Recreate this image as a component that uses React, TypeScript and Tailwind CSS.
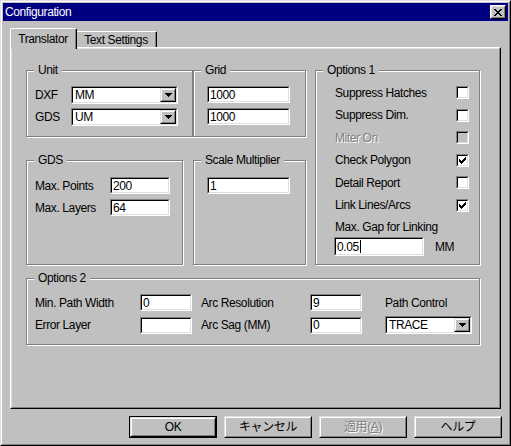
import React from "react";

type P = { className?: string; children?: React.ReactNode };

function Field({ className = "", children, disabled }: P & { disabled?: boolean }) {
  return (
    <div className={`border border-t-[#808080] border-l-[#808080] border-b-white border-r-white ${className}`}>
      <div
        className={`h-full w-full border border-t-black border-l-black border-b-[#dfdfdf] border-r-[#dfdfdf] flex items-center overflow-hidden ${
          disabled ? "bg-[#c0c0c0]" : "bg-white"
        }`}
      >
        {children}
      </div>
    </div>
  );
}

function Raised({ className = "", children }: P) {
  return (
    <div className={`border border-t-[#dfdfdf] border-l-[#dfdfdf] border-b-black border-r-black bg-[#c0c0c0] ${className}`}>
      <div className="h-full w-full border border-t-white border-l-white border-b-[#808080] border-r-[#808080] flex items-center justify-center">
        {children}
      </div>
    </div>
  );
}

function Arrow() {
  return (
    <svg width="7" height="4" viewBox="0 0 7 4" shapeRendering="crispEdges">
      <rect x="0" y="0" width="7" height="1" fill="#000" />
      <rect x="1" y="1" width="5" height="1" fill="#000" />
      <rect x="2" y="2" width="3" height="1" fill="#000" />
      <rect x="3" y="3" width="1" height="1" fill="#000" />
    </svg>
  );
}

function Input({ value, className = "", cursor }: { value: string; className?: string; cursor?: boolean }) {
  return (
    <Field className={className}>
      <span className="pl-[1px] leading-none">{value}</span>
      {cursor && <span className="ml-px w-px h-[13px] bg-black" />}
    </Field>
  );
}

function Combo({ value, className = "" }: { value: string; className?: string }) {
  return (
    <Field className={className}>
      <span className="flex-1 pl-[2px] leading-none">{value}</span>
      <Raised className="w-[16px] h-full">
        <Arrow />
      </Raised>
    </Field>
  );
}

function Check() {
  const rows: [number, number, number][] = [
    [6, 0, 1],
    [5, 1, 2],
    [0, 2, 1],
    [4, 2, 3],
    [0, 3, 2],
    [3, 3, 3],
    [0, 4, 5],
    [1, 5, 3],
    [2, 6, 1],
  ];
  return (
    <svg width="7" height="7" viewBox="0 0 7 7" shapeRendering="crispEdges">
      {rows.map(([x, y, w], i) => (
        <rect key={i} x={x} y={y} width={w} height="1" fill="#000" />
      ))}
    </svg>
  );
}

function CheckBox({ checked, disabled }: { checked?: boolean; disabled?: boolean }) {
  return (
    <Field className="w-[13px] h-[13px]" disabled={disabled}>
      <div className="w-full h-full flex items-center justify-center">{checked && <Check />}</div>
    </Field>
  );
}

function Group({ title, className = "", children }: P & { title: string }) {
  return (
    <div className={`relative border border-[#808080] shadow-[inset_1px_1px_0_#fff,1px_1px_0_#fff] ${className}`}>
      <span className="absolute left-[7px] top-[-8px] h-[14px] leading-[14px] px-[4px] bg-[#c0c0c0] whitespace-nowrap">
        {title}
      </span>
      {children}
    </div>
  );
}

function CheckRow({ label, h, checked, disabled }: { label: string; h: string; checked?: boolean; disabled?: boolean }) {
  return (
    <div className={`flex items-center ${h}`}>
      <span
        className={`w-[121px] leading-none ${disabled ? "text-[#808080] [text-shadow:1px_1px_0_#fff]" : ""}`}
      >
        {label}
      </span>
      <CheckBox checked={checked} disabled={disabled} />
    </div>
  );
}

function Button({ children, def, disabled }: P & { def?: boolean; disabled?: boolean }) {
  const inner = (
    <Raised className="w-full h-full">
      <span className={`leading-none ${disabled ? "text-[#808080] [text-shadow:1px_1px_0_#fff]" : ""}`}>{children}</span>
    </Raised>
  );
  return def ? (
    <div className="w-[88px] h-[22px] border border-black">{inner}</div>
  ) : (
    <div className="w-[88px] h-[22px]">{inner}</div>
  );
}

function CloseBtn() {
  const rows: [number, number, number][] = [
    [0, 0, 2],
    [6, 0, 2],
    [1, 1, 2],
    [5, 1, 2],
    [2, 2, 4],
    [3, 3, 2],
    [2, 4, 4],
    [1, 5, 2],
    [5, 5, 2],
    [0, 6, 2],
    [6, 6, 2],
  ];
  return (
    <div className="w-[16px] h-[14px] border border-t-white border-l-white border-b-black border-r-black bg-[#c0c0c0]">
      <div className="h-full w-full border border-t-[#dfdfdf] border-l-[#dfdfdf] border-b-[#808080] border-r-[#808080] flex items-center justify-center">
        <svg width="8" height="7" viewBox="0 0 8 7" shapeRendering="crispEdges">
          {rows.map(([x, y, w], i) => (
            <rect key={i} x={x} y={y} width={w} height="1" fill="#000" />
          ))}
        </svg>
      </div>
    </div>
  );
}

export default function App() {
  return (
    <div className="w-[511px] h-[446px] bg-[#c0c0c0] border border-t-[#dfdfdf] border-l-[#dfdfdf] border-b-black border-r-black text-[12px] tracking-[-0.4px] text-black font-['Liberation_Sans','Noto_Sans_CJK_JP',sans-serif]">
      <div className="h-full border border-t-white border-l-white border-b-[#808080] border-r-[#808080] p-px flex flex-col">
        {/* Title bar */}
        <div className="h-[18px] bg-[#000080] flex items-center justify-between pl-[2px] pr-[2px]">
          <span className="text-white leading-none">Configuration</span>
          <CloseBtn />
        </div>

        {/* Tabs */}
        <div className="ml-[7px] mt-[7px] h-[19px] flex items-end">
          <div className="relative z-10 -mb-[2px] h-[21px] w-[67px] bg-[#c0c0c0] border-t border-l border-r border-t-white border-l-white border-r-black rounded-tl-[2px] rounded-tr-[2px]">
            <div className="h-full w-full border-r border-r-[#808080] flex items-start justify-center pt-[3px]">
              <span className="leading-[14px]">Translator</span>
            </div>
          </div>
          <div className="h-[16px] w-[80px] border-t border-r border-t-white border-r-black rounded-tr-[2px]">
            <div className="h-full w-full border-r border-r-[#808080] flex items-start justify-center pt-[1px]">
              <span className="leading-[14px]">Text Settings</span>
            </div>
          </div>
        </div>

        {/* Panel */}
        <div className="ml-[7px] w-[491px] h-[362px] border border-t-white border-l-white border-b-black border-r-black">
          <div className="h-full w-full border border-t-[#dfdfdf] border-l-[#dfdfdf] border-b-[#808080] border-r-[#808080] pl-[14px] pt-[21px] flex flex-col">
            <div className="flex">
              {/* Left column */}
              <div className="w-[280px] flex flex-col">
                <div className="flex">
                  <Group title="Unit" className="w-[167px] h-[67px]">
                    <div className="pl-[8px] pt-[15px] flex flex-col gap-[4px]">
                      <div className="flex items-center h-[18px]">
                        <span className="w-[36px] leading-none">DXF</span>
                        <Combo value="MM" className="w-[107px] h-[18px]" />
                      </div>
                      <div className="flex items-center h-[18px]">
                        <span className="w-[36px] leading-none">GDS</span>
                        <Combo value="UM" className="w-[107px] h-[18px]" />
                      </div>
                    </div>
                  </Group>
                  <Group title="Grid" className="w-[113px] h-[67px]">
                    <div className="pl-[13px] pt-[15px] flex flex-col gap-[5px]">
                      <Input value="1000" className="w-[83px] h-[17px]" />
                      <Input value="1000" className="w-[83px] h-[17px]" />
                    </div>
                  </Group>
                </div>
                <div className="flex mt-[23px]">
                  <Group title="GDS" className="w-[157px] h-[105px]">
                    <div className="pl-[8px] pt-[16px] flex flex-col gap-[5px]">
                      <div className="flex items-center h-[17px]">
                        <span className="w-[75px] leading-none">Max. Points</span>
                        <Input value="200" className="w-[60px] h-[17px]" />
                      </div>
                      <div className="flex items-center h-[17px]">
                        <span className="w-[75px] leading-none">Max. Layers</span>
                        <Input value="64" className="w-[60px] h-[17px]" />
                      </div>
                    </div>
                  </Group>
                  <Group title="Scale Multiplier" className="ml-[10px] w-[113px] h-[105px]">
                    <div className="pl-[13px] pt-[16px]">
                      <Input value="1" className="w-[83px] h-[17px]" />
                    </div>
                  </Group>
                </div>
              </div>

              {/* Options 1 */}
              <Group title="Options 1" className="ml-[9px] w-[165px] h-[195px]">
                <div className="pl-[19px] pt-[10px] flex flex-col">
                  <CheckRow label="Suppress Hatches" h="h-[23px]" />
                  <CheckRow label="Suppress Dim." h="h-[22px]" />
                  <CheckRow label="Miter On" h="h-[23px]" disabled />
                  <CheckRow label="Check Polygon" h="h-[22px]" checked />
                  <CheckRow label="Detail Report" h="h-[23px]" />
                  <CheckRow label="Link Lines/Arcs" h="h-[22px]" checked />
                  <div className="h-[21px] flex items-center">
                    <span className="leading-none">Max. Gap for Linking</span>
                  </div>
                  <div className="flex items-center -ml-px">
                    <Input value="0.05" cursor className="w-[90px] h-[19px]" />
                    <span className="ml-[11px] leading-none">MM</span>
                  </div>
                </div>
              </Group>
            </div>

            {/* Options 2 */}
            <Group title="Options 2" className="mt-[13px] w-[454px] h-[67px]">
              <div className="pl-[8px] pt-[15px] grid grid-cols-[105px_61px_109px_75px_87px] grid-rows-[17px_18px] gap-y-[5px] items-center">
                <span className="leading-none">Min. Path Width</span>
                <Input value="0" className="w-[52px] h-[17px]" />
                <span className="leading-none">Arc Resolution</span>
                <Input value="9" className="w-[52px] h-[17px]" />
                <span className="leading-none">Path Control</span>
                <span className="leading-none">Error Layer</span>
                <Input value="" className="w-[52px] h-[17px]" />
                <span className="leading-none">Arc Sag (MM)</span>
                <Input value="0" className="w-[52px] h-[17px]" />
                <Combo value="TRACE" className="w-[87px] h-[18px]" />
              </div>
            </Group>
          </div>
        </div>

        {/* Buttons */}
        <div className="mt-[7px] flex justify-end gap-[7px] pr-[6px]">
          <Button def>OK</Button>
          <Button>キャンセル</Button>
          <Button disabled>
            適用(<span className="underline">A</span>)
          </Button>
          <Button>ヘルプ</Button>
        </div>
      </div>
    </div>
  );
}
